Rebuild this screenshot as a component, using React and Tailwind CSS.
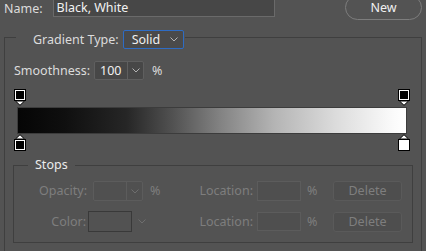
import React from "react";

const Chevron = ({ color = "#b4b4b4" }) => (
  <svg width="8" height="5" viewBox="0 0 8 5" fill="none">
    <path d="M0.5 0.5 L4 4 L7.5 0.5" stroke={color} strokeWidth="1" />
  </svg>
);

const TopStop = () => (
  <svg width="12" height="17" viewBox="0 0 12 17">
    <rect x="0.5" y="0.5" width="11" height="11" fill="#fff" stroke="#000" />
    <rect x="2" y="2" width="8" height="8" fill="#000" />
    <path d="M1.5 12 L10.5 12 L6 16.3 Z" fill="#fff" stroke="#000" strokeWidth="1" />
  </svg>
);

const BottomStop = ({ fill }) => (
  <svg width="12" height="17" viewBox="0 0 12 17">
    <path d="M6 0.7 L10.5 5 L1.5 5 Z" fill="#fff" stroke="#000" strokeWidth="1" />
    <rect x="0.5" y="5.5" width="11" height="11" fill="#fff" stroke="#000" />
    <rect x="2" y="7" width="8" height="8" fill={fill} />
  </svg>
);

export default function App() {
  return (
    <div className="w-[426px] h-[251px] overflow-hidden bg-[#535353] font-['Noto_Sans',sans-serif] text-[12.5px] leading-[16px] text-[#dcdcdc]">
      {/* name row */}
      <div className="flex items-start -mt-[5px] h-[25px]">
        <span className="ml-[4px] mt-[6px]">Name:</span>
        <div className="ml-[10px] mt-[1px] w-[222px] h-[21px] bg-[#474747] border border-[#6a6a6a] pl-[3px] pt-[3px] text-[#f2f2f2]">
          Black, White
        </div>
        <button className="ml-auto mr-[4px] w-[77px] h-[25px] rounded-full border border-[#7d7d7d] text-[#f0f0f0] pt-[1px]">
          New
        </button>
      </div>

      <fieldset className="mx-[4px] mt-[5px] border border-[#3f3f3f] h-[300px]">
        <legend className="ml-[11px] pl-[17px] pr-[1px] pt-[5px] flex items-center">
          <span>Gradient Type:</span>
          <div className="ml-[4px] w-[61px] h-[19px] rounded-[2px] border border-[#2e6cc4] bg-[#4a4a4a] flex items-center pl-[8px] pr-[5px] text-[#f0f0f0]">
            <span>Solid</span>
            <span className="ml-auto flex"><Chevron /></span>
          </div>
        </legend>

        {/* smoothness */}
        <div className="flex items-center mt-[12px] ml-[9px] h-[19px]">
          <span>Smoothness:</span>
          <div className="ml-[4px] w-[50px] h-[19px] rounded-[2px] border border-[#5f5f5f] bg-[#474747] flex items-stretch text-[#f0f0f0]">
            <span className="flex-1 pl-[5px] pt-[1px]">100</span>
            <span className="w-[16px] border-l border-[#5f5f5f] flex items-center justify-center"><Chevron /></span>
          </div>
          <span className="ml-[8px]">%</span>
        </div>

        {/* gradient editor */}
        <div className="flex justify-between mt-[9px] ml-[9px] mr-[11px]">
          <TopStop />
          <TopStop />
        </div>
        <div className="mt-[1px] ml-[12px] mr-[14px] h-[27px] border border-[#3c3c3c] bg-[linear-gradient(to_right,#050505,#0f0f0f_12%,#262626_28%,#525252_40%,#828282_52%,#b4b4b4_66%,#dcdcdc_82%,#fbfbfb_97%,#fff)]" />
        <div className="flex justify-between ml-[9px] mr-[11px]">
          <BottomStop fill="#000" />
          <BottomStop fill="#fff" />
        </div>

        {/* stops */}
        <fieldset className="mt-[6px] ml-[8px] mr-[8px] h-[86px] border border-[#3f3f3f]">
          <legend className="ml-[14px] px-[7px] text-[#ececec]">Stops</legend>

          <div className="flex items-center mt-[8px] h-[20px] text-[#7e7e7e]">
            <span className="w-[73px] text-right">Opacity:</span>
            <div className="ml-[6px] w-[50px] h-[20px] rounded-[2px] border border-[#5c5c5c] bg-[#505050] flex items-stretch">
              <span className="flex-1" />
              <span className="w-[16px] border-l border-[#5c5c5c] flex items-center justify-center"><Chevron color="#6e6e6e" /></span>
            </div>
            <span className="ml-[7px] w-[12px]">%</span>
            <span className="w-[91px] text-right">Location:</span>
            <div className="ml-[4px] w-[44px] h-[20px] border border-[#5c5c5c] bg-[#4f4f4f]" />
            <span className="ml-[6px] w-[12px]">%</span>
            <button className="ml-[14px] w-[69px] h-[20px] rounded-[3px] border border-[#5a5a5a] bg-[#4e4e4e] text-[#7e7e7e]">Delete</button>
          </div>

          <div className="flex items-center mt-[10px] h-[21px] text-[#7e7e7e]">
            <span className="w-[72px] text-right">Color:</span>
            <div className="ml-[2px] w-[44px] h-[21px] border border-[#393939] bg-[#525252]" />
            <span className="w-[30px] pl-[6px] flex"><Chevron color="#6e6e6e" /></span>
            <span className="w-[91px] text-right">Location:</span>
            <div className="ml-[4px] w-[44px] h-[19px] border border-[#5c5c5c] bg-[#4f4f4f]" />
            <span className="ml-[6px] w-[12px]">%</span>
            <button className="ml-[14px] w-[69px] h-[20px] rounded-[3px] border border-[#5a5a5a] bg-[#4e4e4e] text-[#7e7e7e]">Delete</button>
          </div>
        </fieldset>
      </fieldset>
    </div>
  );
}
